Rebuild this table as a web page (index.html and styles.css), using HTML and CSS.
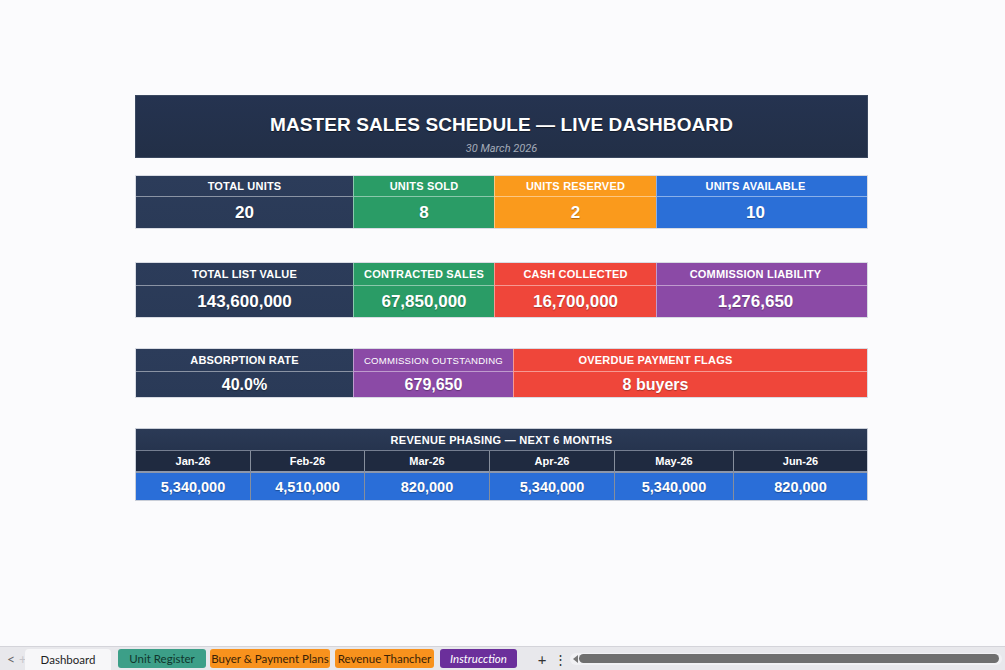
FILE: index.html
```html
<!DOCTYPE html>
<html lang="en">
<head>
<meta charset="utf-8">
<title>Master Sales Schedule — Live Dashboard</title>
<link rel="stylesheet" href="styles.css">
</head>
<body>
<div class="page">
  <main class="sheet">
    <header class="banner">
      <h1 class="title">MASTER SALES SCHEDULE — LIVE DASHBOARD</h1>
      <div class="date">30 March 2026</div>
    </header>

    <section class="kpis row1">
      <div class="cell navy"><div class="lbl">TOTAL UNITS</div><div class="val">20</div></div>
      <div class="cell green"><div class="lbl">UNITS SOLD</div><div class="val">8</div></div>
      <div class="cell orange"><div class="lbl">UNITS RESERVED</div><div class="val">2</div></div>
      <div class="cell blue last"><div class="lbl">UNITS AVAILABLE</div><div class="val">10</div></div>
    </section>

    <section class="kpis row2">
      <div class="cell navy"><div class="lbl">TOTAL LIST VALUE</div><div class="val">143,600,000</div></div>
      <div class="cell green"><div class="lbl">CONTRACTED SALES</div><div class="val">67,850,000</div></div>
      <div class="cell red"><div class="lbl">CASH COLLECTED</div><div class="val">16,700,000</div></div>
      <div class="cell purple last"><div class="lbl">COMMISSION LIABILITY</div><div class="val">1,276,650</div></div>
    </section>

    <section class="kpis row3">
      <div class="cell navy"><div class="lbl">ABSORPTION RATE</div><div class="val">40.0%</div></div>
      <div class="cell purple"><div class="lbl small">COMMISSION OUTSTANDING</div><div class="val">679,650</div></div>
      <div class="cell red wide"><div class="lbl">OVERDUE PAYMENT FLAGS</div><div class="val">8 buyers</div></div>
    </section>

    <section class="phasing">
      <div class="ph-title">REVENUE PHASING — NEXT 6 MONTHS</div>
      <div class="ph-grid">
        <div class="mcol"><div class="mon">Jan-26</div><div class="amt">5,340,000</div></div>
        <div class="mcol"><div class="mon">Feb-26</div><div class="amt">4,510,000</div></div>
        <div class="mcol"><div class="mon">Mar-26</div><div class="amt">820,000</div></div>
        <div class="mcol"><div class="mon">Apr-26</div><div class="amt">5,340,000</div></div>
        <div class="mcol"><div class="mon">May-26</div><div class="amt">5,340,000</div></div>
        <div class="mcol"><div class="mon">Jun-26</div><div class="amt">820,000</div></div>
      </div>
    </section>
  </main>

  <footer class="tabbar">
    <span class="nav-arrow">&lt;</span>
    <span class="nav-add">+</span>
    <span class="tab active">Dashboard</span>
    <span class="tab teal">Unit Register</span>
    <span class="tab amber buyer">Buyer &amp; Payment Plans</span>
    <span class="tab amber revenue">Revenue Thancher</span>
    <span class="tab violet">Instrucction</span>
    <span class="tool plus">+</span>
    <span class="tool dots">⋮</span>
    <div class="scroll">
      <span class="scroll-arrow"></span>
      <span class="thumb"></span>
    </div>
  </footer>
</div>
</body>
</html>
```

FILE: styles.css
```css
* { box-sizing: border-box; }

html, body {
  margin: 0;
  padding: 0;
}

body {
  background: #fbfbfd;
  font-family: "Liberation Sans", Arial, sans-serif;
  color: #fff;
}

.page {
  height: 670px;
  display: flex;
  flex-direction: column;
}

.sheet {
  flex: 1;
  width: 733px;
  margin-left: 135px;
  padding-top: 95px;
  display: flex;
  flex-direction: column;
}

.banner {
  height: 63px;
  background: linear-gradient(180deg, #253350 0%, #222f47 100%);
  border: 1px solid #3a4860;
  display: flex;
  flex-direction: column;
  align-items: center;
}

.title {
  margin: 18px 0 0;
  font-size: 19px;
  font-weight: bold;
  letter-spacing: 0.1px;
  line-height: 22px;
  text-shadow: 0 1px 1px rgba(0,0,0,0.5);
}

.date {
  margin-top: 6px;
  font-family: Roboto, "Liberation Sans", sans-serif;
  font-style: italic;
  font-size: 11px;
  color: #a3abb8;
}

.kpis {
  display: grid;
  border: 1px solid #d8dbe3;
}

.row1 {
  margin-top: 17px;
  grid-template-columns: 217px 141px 162px 1fr;
}
.row2 {
  margin-top: 33px;
  grid-template-columns: 217px 141px 162px 1fr;
}
.row3 {
  margin-top: 30px;
  grid-template-columns: 217px 160px 1fr;
}

.cell {
  display: flex;
  flex-direction: column;
  border-left: 1px solid rgba(255,255,255,0.45);
}
.cell:first-child { border-left: none; }

.lbl {
  height: 21px;
  display: flex;
  align-items: center;
  justify-content: center;
  font-size: 11px;
  font-weight: bold;
  letter-spacing: 0.2px;
  border-bottom: 1px solid rgba(255,255,255,0.45);
}
.lbl.small {
  font-weight: normal;
  font-size: 9.6px;
}
.row2 .lbl, .row3 .lbl { height: 23px; }

.val {
  height: 31px;
  display: flex;
  align-items: center;
  justify-content: center;
  font-size: 17px;
  font-weight: bold;
  text-shadow: 0 1px 1px rgba(0,0,0,0.3);
}
.row3 .val { height: 25px; font-size: 16px; }

.cell.last .lbl, .cell.last .val { padding-right: 13px; }
.cell.wide .lbl, .cell.wide .val { padding-right: 70px; }

.navy { background: linear-gradient(180deg, #2c3c5a, #2a3a57); }
.green { background: #2a9c66; }
.orange { background: #fa9a1c; }
.blue { background: #2b6fd7; }
.red { background: #ef463a; }
.purple { background: #8b4aa6; }

.phasing {
  margin-top: 30px;
  border: 1px solid #c9ced8;
  background: #24324b;
}

.ph-title {
  height: 22px;
  display: flex;
  align-items: center;
  justify-content: center;
  font-size: 11px;
  font-weight: bold;
  letter-spacing: 0.3px;
  background: linear-gradient(180deg, #2b3a56, #26344e);
  border-bottom: 1px solid rgba(255,255,255,0.35);
}

.ph-grid {
  display: grid;
  grid-template-columns: 114px 114px 125px 125px 119px 1fr;
}

.mcol {
  display: flex;
  flex-direction: column;
  border-left: 1px solid rgba(255,255,255,0.45);
}
.mcol:first-child { border-left: none; }

.mon {
  height: 22px;
  display: flex;
  align-items: center;
  justify-content: center;
  font-size: 11px;
  font-weight: bold;
  background: #1f2a40;
  border-bottom: 2px solid #8d97aa;
}

.amt {
  height: 27px;
  display: flex;
  align-items: center;
  justify-content: center;
  font-size: 14.5px;
  font-weight: bold;
  background: #2a6ed8;
  text-shadow: 0 1px 1px rgba(0,0,0,0.3);
}

/* Sheet tab bar */
.tabbar {
  height: 24px;
  background: #e8e8ec;
  border-top: 1px solid #d4d4da;
  display: flex;
  align-items: center;
  font-family: Lato, "Liberation Sans", sans-serif;
  font-size: 11.5px;
  color: #222;
}

.nav-arrow {
  width: 19px;
  padding-left: 7px;
  color: #666;
  font-size: 14px;
}
.nav-add {
  width: 6px;
  color: #c4c4ca;
  font-size: 13px;
}

.tab {
  height: 19px;
  display: flex;
  align-items: center;
  justify-content: center;
  border-radius: 3px;
  margin-right: 4px;
  white-space: nowrap;
}
.tab.active {
  width: 86px;
  background: #f7f7f9;
  border-radius: 4px 4px 0 0;
  height: 22px;
  margin-top: 2px;
  margin-right: 7px;
  color: #1e1e1e;
}
.tab.teal {
  width: 88px;
  background: #3c9f88;
  color: #10362d;
}
.tab.amber {
  background: #f8921d;
  color: #3a2206;
}
.tab.buyer { width: 120px; }
.tab.revenue { width: 99px; margin-left: 1px; margin-right: 6px; }
.tab.violet {
  width: 77px;
  background: #6b2f9b;
  color: #fff;
  font-style: italic;
}

.tool {
  color: #333;
  font-size: 15px;
}
.tool.plus { margin-left: 10px; width: 22px; text-align: center; }
.tool.dots { margin-left: 1px; width: 12px; font-size: 13px; text-align: center; }

.scroll {
  flex: 1;
  margin: 0 3px 0 4px;
  height: 12px;
  background: #f1f1f4;
  border-radius: 6px;
  display: flex;
  align-items: center;
  padding: 0 3px;
}
.scroll-arrow {
  width: 0;
  height: 0;
  border-top: 4px solid transparent;
  border-bottom: 4px solid transparent;
  border-right: 5px solid #777;
  margin-right: 1px;
}
.thumb {
  flex: 1;
  height: 9px;
  background: #6f6f6f;
  border-radius: 5px;
}
```
